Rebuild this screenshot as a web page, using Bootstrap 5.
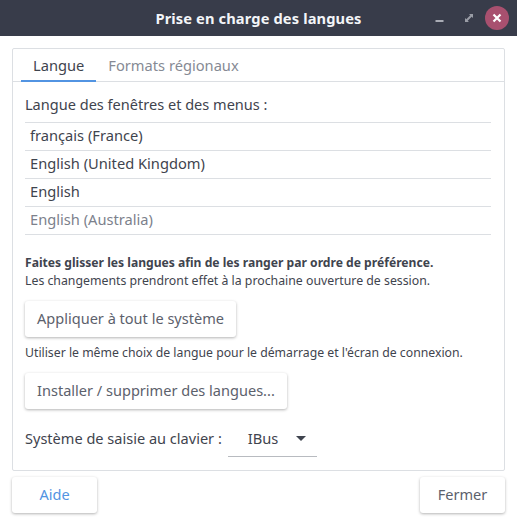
<!DOCTYPE html>
<html lang="fr"><head><meta charset="utf-8">
<link href="https://cdn.jsdelivr.net/npm/bootstrap@5.3.0/dist/css/bootstrap.min.css" rel="stylesheet">
<style>
html,body{width:517px;height:525px;overflow:hidden}
body{background:#fff;font-family:"Noto Sans",sans-serif;font-size:14.67px;color:#3f444e}
.titlebar{height:36px;background:#383c4a;color:#f3f5f8;font-weight:700;font-size:14.67px;display:grid;grid-template-columns:1fr auto 1fr;align-items:center}
.ttl{letter-spacing:.12px}
.wbtn{width:30px;height:24px}
.closeb{width:24px;background:#a8506f;border-radius:50%;margin-left:2px}
.frame{margin:12px 12px 0;height:423px;border:1px solid #dcdfe3;border-radius:2px}
.tabbar{height:33px;border-bottom:1px solid #dcdfe3;padding-left:8px}
.tabi{padding:0 12px;height:32px;line-height:32px;color:#868a94}
.tabi.on{color:#3f444e;border-bottom:2px solid #5294e2;height:33px}
.pane{padding:12px 13px 0 12px}
.lbl{font-size:14.55px;margin-bottom:6px}
.rowl{height:28px;line-height:25px;padding-left:5px;border-top:1px solid #dcdfe3}
.rowl.lastr{border-bottom:1px solid #dcdfe3;height:29px;color:#7c818c}
.boldt{font-size:12.14px;font-weight:700;line-height:18px;margin-top:19px}
.smallt{font-size:12.3px;line-height:18px}
.smallu{font-size:12.25px}
.gap11{margin-top:11px}
.gap7{margin-top:7px}
.gap12{margin-top:12px}
.fbtn{height:36px;padding:0 12px;background:#fff;border:0;border-radius:3px;box-shadow:0 1px 3px rgba(0,0,0,.3);color:#5c616c;font-size:14.55px}
.combo{width:89px;height:36px;border-bottom:1px solid #b8bbc0;padding:0 11px 0 20px}
.caret{width:0;height:0;border-left:5px solid transparent;border-right:5px solid transparent;border-top:5px solid #3f444e}
.sep6{margin-right:6px}
.minic{margin-left:4px}
.maxic{margin-left:2px}
.foot{padding:6px 12px 0}
.aide{width:85px;padding:0;color:#5294e2}
.ferm{width:85px;padding:0}
</style></head><body>
<div class="titlebar">
<div></div>
<div class="ttl text-center">Prise en charge des langues</div>
<div class="d-flex align-items-center justify-content-end me-2">
<div class="wbtn d-flex align-items-center justify-content-center"><svg class="minic" width="10" height="10" viewBox="0 0 10 10"><rect x="0.5" y="7" width="8" height="2" fill="#a9acb5"/></svg></div>
<div class="wbtn d-flex align-items-center justify-content-center"><svg class="maxic" width="10" height="10" viewBox="0 0 10 10"><path d="M5 1h4v4l-1.3-1.3-4 4L5 9H1V5l1.3 1.3 4-4z" fill="#9a9da6"/></svg></div>
<div class="wbtn closeb d-flex align-items-center justify-content-center"><svg width="10" height="10" viewBox="0 0 10 10"><path d="M1.5 1.5l7 7M8.5 1.5l-7 7" stroke="#fff" stroke-width="2.2"/></svg></div>
</div></div>
<div class="frame">
<div class="tabbar d-flex"><div class="tabi on">Langue</div><div class="tabi">Formats régionaux</div></div>
<div class="pane">
<div class="lbl">Langue des fenêtres et des menus :</div>
<div class="rowl">français (France)</div><div class="rowl">English (United Kingdom)</div><div class="rowl">English</div><div class="rowl lastr">English (Australia)</div>
<div class="boldt">Faites glisser les langues afin de les ranger par ordre de préférence.</div>
<div class="smallt">Les changements prendront effet à la prochaine ouverture de session.</div>
<button class="fbtn btn gap11 d-block">Appliquer à tout le système</button>
<div class="smallt smallu gap7">Utiliser le même choix de langue pour le démarrage et l'écran de connexion.</div>
<button class="fbtn btn gap11 d-block">Installer / supprimer des langues...</button>
<div class="d-flex align-items-center gap12"><span class="lbl mb-0 sep6">Système de saisie au clavier :</span><div class="combo d-flex align-items-center justify-content-between"><span>IBus</span><span class="caret"></span></div></div>
</div></div>
<div class="foot d-flex justify-content-between"><button class="fbtn btn aide">Aide</button><button class="fbtn btn ferm">Fermer</button></div>
</body></html>
